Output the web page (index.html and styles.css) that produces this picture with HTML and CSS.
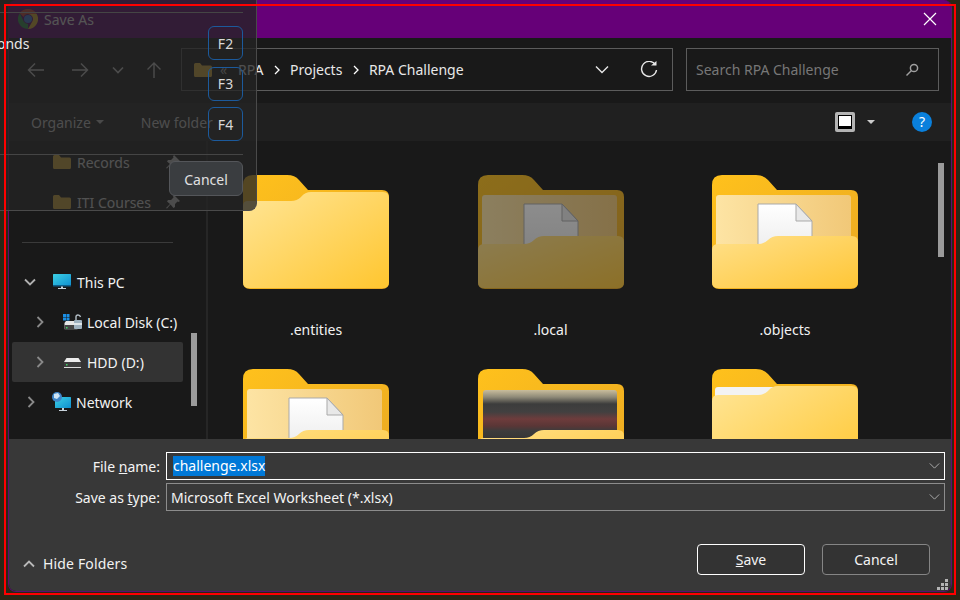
FILE: index.html
```html
<!DOCTYPE html>
<html lang="en">
<head>
<meta charset="utf-8">
<title>Save As</title>
<link rel="stylesheet" href="styles.css">
</head>
<body>
<svg class="defs" width="0" height="0" aria-hidden="true">
  <defs>
    <linearGradient id="gBack" x1="0" y1="0" x2="1" y2="1"><stop offset="0" stop-color="#ffc11c"/><stop offset="1" stop-color="#e9a823"/></linearGradient>
    <linearGradient id="gPaper" x1="0" y1="0" x2="1" y2="0"><stop offset="0" stop-color="#fde4a4"/><stop offset="1" stop-color="#f1c878"/></linearGradient>
    <linearGradient id="gFront" x1="0" y1="0" x2="1" y2="1"><stop offset="0" stop-color="#ffe596"/><stop offset="1" stop-color="#ffc62f"/></linearGradient>
    <linearGradient id="gFrontOpen" x1="0" y1="0" x2="1" y2="1"><stop offset="0" stop-color="#ffe08a"/><stop offset="1" stop-color="#ffc636"/></linearGradient>
    <linearGradient id="gDoc" x1="0" y1="0" x2="0" y2="1"><stop offset="0" stop-color="#fff"/><stop offset="1" stop-color="#eee"/></linearGradient>
    <linearGradient id="gBlur" x1="0" y1="0" x2="0" y2="1">
      <stop offset="0" stop-color="#c9bd9c"/><stop offset=".14" stop-color="#8f8a78"/><stop offset=".28" stop-color="#3c3c3c"/>
      <stop offset=".44" stop-color="#424040"/><stop offset=".58" stop-color="#6e3c3c"/><stop offset=".72" stop-color="#5a3636"/>
      <stop offset=".82" stop-color="#3c3c3c"/><stop offset="1" stop-color="#353535"/>
    </linearGradient>
    <linearGradient id="gScreen" x1="0" y1="0" x2="1" y2="1"><stop offset="0" stop-color="#3cd0e4"/><stop offset="1" stop-color="#0f8fd0"/></linearGradient>

    <symbol id="folder-back" viewBox="0 0 146 114"><path fill="url(#gBack)" d="M0 10Q0 0 10 0H44Q52 0 56 5L65 15H139Q146 15 146 22V107Q146 114 139 114H7Q0 114 0 107Z"/></symbol>
    <symbol id="folder-closed" viewBox="0 0 146 114">
      <use href="#folder-back" width="146" height="114"/>
      <path fill="url(#gFront)" d="M0 31Q0 26 5 26H48Q54 26 58 22Q62 17 68 17H140Q146 17 146 23V107Q146 113 140 113H6Q0 113 0 107Z"/>
    </symbol>
    <symbol id="folder-doc" viewBox="0 0 146 114">
      <use href="#folder-back" width="146" height="114"/>
      <rect x="4" y="20" width="135" height="60" rx="3" fill="url(#gPaper)"/>
      <path fill="url(#gDoc)" stroke="#a9a9a9" d="M46 29H84L100 46V72H46Z"/>
      <path fill="#e8e8e8" stroke="#a9a9a9" d="M84 29V46H100Z"/>
      <path fill="url(#gFrontOpen)" d="M0 75Q0 69 6 69H46Q52 69 56 65Q60 61 66 61H140Q146 61 146 67V107Q146 113 140 113H6Q0 113 0 107Z"/>
    </symbol>
    <symbol id="folder-photo" viewBox="0 0 146 114">
      <use href="#folder-back" width="146" height="114"/>
      <rect x="5" y="21" width="134" height="50" rx="3" fill="url(#gBlur)"/>
      <path fill="url(#gFrontOpen)" d="M0 75Q0 69 6 69H46Q52 69 56 65Q60 61 66 61H140Q146 61 146 67V107Q146 113 140 113H6Q0 113 0 107Z"/>
    </symbol>
    <symbol id="folder-white" viewBox="0 0 146 114">
      <use href="#folder-back" width="146" height="114"/>
      <rect x="3" y="18" width="90" height="20" rx="3" fill="#f3f3f3"/>
      <path fill="url(#gFront)" d="M0 32Q0 26 6 26H46Q52 26 56 22Q60 17 66 17H140Q146 17 146 23V107Q146 113 140 113H6Q0 113 0 107Z"/>
    </symbol>
    <symbol id="tiny-folder" viewBox="0 0 18 14"><path fill="#f0bd3e" d="M0 1.500Q0 0 1.500 0H6L8 2.500H16.500Q18 2.500 18 4V12.500Q18 14 16.500 14H1.500Q0 14 0 12.500Z"/></symbol>
    <symbol id="pin" viewBox="0 0 14 14"><path fill="#d8d8d8" d="M8 0 14 6 12.500 7 11.500 6.500 9 9 9 12 7.500 13 4.500 9.500 1 13.500 0 13 4 9 1 6.500 2 5 5 5 7.500 2.500 7 1.500Z"/></symbol>
  </defs>
</svg>

<main class="desktop">
  <section class="dialog">
    <header class="titlebar">
      <div class="title">
        <svg class="chrome" viewBox="0 0 20 20" aria-hidden="true">
          <path fill="#e04a3a" d="M10 0A10 10 0 0 1 18.700 5H10A5 5 0 0 0 5.500 8L1.800 4.200A10 10 0 0 1 10 0Z"/>
          <path fill="#f4c430" d="M18.700 5A10 10 0 0 1 10 20L14.300 12.500A5 5 0 0 0 14.300 7.500 5 5 0 0 0 10 5Z"/>
          <path fill="#2f9e4f" d="M1.800 4.200 5.700 12.500A5 5 0 0 0 10 15L10 20A10 10 0 0 1 1.800 4.200Z"/>
          <circle cx="10" cy="10" r="4" fill="#3f86f0"/>
        </svg>
        <span>Save As</span>
      </div>
      <svg class="close" viewBox="0 0 14 14" aria-hidden="true"><path d="M1 1 13 13M13 1 1 13"/></svg>
    </header>

    <div class="addressrow">
      <div class="nav">
        <svg class="nav-back line" viewBox="0 0 18 16"><path d="M17 8H2M8 1.500 1.500 8 8 14.500"/></svg>
        <svg class="nav-fwd line" viewBox="0 0 18 16"><path d="M1 8H16M10 1.500 16.500 8 10 14.500"/></svg>
        <svg class="nav-down line" viewBox="0 0 12 8"><path d="M1 1.500 6 6.500 11 1.500"/></svg>
        <svg class="nav-up line" viewBox="0 0 18 18"><path d="M9 17V2M2.500 8.500 9 2 15.500 8.500"/></svg>
      </div>
      <div class="address">
        <svg class="crumb-folder"><use href="#tiny-folder"/></svg>
        <span class="crumb-more">«</span>
        <span class="crumb">RPA</span>
        <svg class="crumb-sep" viewBox="0 0 6 10"><path d="M1 1 5 5 1 9"/></svg>
        <span class="crumb">Projects</span>
        <svg class="crumb-sep" viewBox="0 0 6 10"><path d="M1 1 5 5 1 9"/></svg>
        <span class="crumb">RPA Challenge</span>
        <svg class="addr-chev line" viewBox="0 0 14 9"><path d="M1 1.500 7 7.500 13 1.500"/></svg>
        <svg class="refresh line" viewBox="0 0 18 18"><path d="M15.500 4A7.500 7.500 0 1 0 16.500 9"/><path class="fillw" d="M11 4.500H16.500V0Z"/></svg>
      </div>
      <div class="search">
        <span>Search RPA Challenge</span>
        <svg class="magnifier" viewBox="0 0 14 14"><circle cx="9" cy="5" r="3.600"/><path d="M6.500 7.500 1.500 12.500"/></svg>
      </div>
    </div>

    <div class="toolbar">
      <span class="tool">Organize</span>
      <i class="caret caret-org"></i>
      <span class="tool tool-new">New folder</span>
      <div class="view-icon"><div class="view-inner"></div></div>
      <i class="caret caret-view"></i>
      <div class="help">?</div>
    </div>

    <div class="content">
      <nav class="sidebar">
        <div class="side-row pinned"><svg class="side-folder"><use href="#tiny-folder"/></svg><span>Records</span><svg class="pin"><use href="#pin"/></svg></div>
        <div class="side-row pinned"><svg class="side-folder"><use href="#tiny-folder"/></svg><span>ITI Courses</span><svg class="pin"><use href="#pin"/></svg></div>
        <div class="side-sep"></div>
        <div class="side-row pc">
          <svg class="exp line" viewBox="0 0 12 8"><path d="M1 1.500 6 6.500 11 1.500"/></svg>
          <svg class="side-ico" viewBox="0 0 18 16"><rect y="0" width="18" height="12" rx=".5" fill="url(#gScreen)"/><rect y="11" width="18" height="1.500" fill="#0d5f8c"/><path fill="#c9d4dc" d="M8 12.500H10V14H13V15H5V14H8Z"/></svg>
          <span>This PC</span>
        </div>
        <div class="side-row disk">
          <svg class="exp-r line" viewBox="0 0 8 12"><path d="M1.500 1 6.500 6 1.500 11"/></svg>
          <svg class="side-ico disk-ico" viewBox="0 0 20 17">
            <path fill="#1b8fe6" d="M0 0H3V3H0ZM3.500 0H6.500V3H3.500ZM0 3.500H3V6.500H0ZM3.500 3.500H6.500V6.500H3.500Z"/>
            <path fill="#e6e6e6" d="M1.500 9 3 7H13V15H1.500Z"/><rect x="1.500" y="11" width="13" height="5" fill="#454545"/><rect x="3" y="13" width="1.500" height="1.500" fill="#46d36a"/>
            <path fill="none" stroke="#b5c0c8" stroke-width="1.400" d="M13 6V3Q13 1 15 1T17.500 3"/><rect x="11" y="6" width="8" height="9" rx="1" fill="#9fb2c0"/><rect x="11" y="9" width="8" height="2" fill="#dfe6ea"/>
          </svg>
          <span>Local Disk (C:)</span>
        </div>
        <div class="side-row disk selected">
          <svg class="exp-r line" viewBox="0 0 8 12"><path d="M1.500 1 6.500 6 1.500 11"/></svg>
          <svg class="side-ico disk-ico" viewBox="0 0 20 17">
            <path fill="#ececec" d="M1 8 3.500 4H15.500L18 8Z"/><rect x="1" y="8" width="17" height="5" fill="#3e3e3e"/><rect x="1" y="13" width="17" height="1" fill="#dcdcdc"/><rect x="3" y="10" width="1.500" height="1.500" fill="#46d36a"/>
          </svg>
          <span>HDD (D:)</span>
        </div>
        <div class="side-row net">
          <svg class="exp-r line" viewBox="0 0 8 12"><path d="M1.500 1 6.500 6 1.500 11"/></svg>
          <svg class="side-ico net-ico" viewBox="0 0 20 20">
            <rect x="4" y="5" width="16" height="11" rx=".5" fill="url(#gScreen)"/><path fill="#c9d4dc" d="M11 16H13V18H16V19H8V18H11Z"/>
            <circle cx="6" cy="5" r="5" fill="#3f86c8"/><path fill="#cfe4f5" d="M3 2 7 1 9 4 6 7 3 6Z"/>
          </svg>
          <span>Network</span>
        </div>
        <div class="side-thumb"></div>
      </nav>

      <div class="files">
        <div class="grid">
          <figure class="file"><svg class="folder"><use href="#folder-closed"/></svg><figcaption>.entities</figcaption></figure>
          <figure class="file"><svg class="folder hidden-item"><use href="#folder-doc"/></svg><figcaption>.local</figcaption></figure>
          <figure class="file"><svg class="folder"><use href="#folder-doc"/></svg><figcaption>.objects</figcaption></figure>
          <figure class="file"><svg class="folder"><use href="#folder-doc"/></svg></figure>
          <figure class="file"><svg class="folder"><use href="#folder-photo"/></svg></figure>
          <figure class="file"><svg class="folder"><use href="#folder-white"/></svg></figure>
        </div>
        <div class="main-thumb"></div>
      </div>
    </div>

    <footer class="bottom">
      <div class="form">
        <label class="form-label">File <u>n</u>ame:</label>
        <div class="field active"><span class="selected-text">challenge.xlsx</span><svg class="field-chev" viewBox="0 0 12 7"><path d="M.5 .5 6 6 11.500 .5"/></svg></div>
        <label class="form-label">Save as <u>t</u>ype:</label>
        <div class="field"><span>Microsoft Excel Worksheet (*.xlsx)</span><svg class="field-chev" viewBox="0 0 12 7"><path d="M.5 .5 6 6 11.500 .5"/></svg></div>
      </div>
      <div class="actions">
        <svg class="hide-chev" viewBox="0 0 12 8"><path d="M1 6.500 6 1.500 11 6.500"/></svg>
        <span class="hide-text">Hide Folders</span>
        <button class="btn primary"><u>S</u>ave</button>
        <button class="btn">Cancel</button>
      </div>
      <svg class="grip" viewBox="0 0 12 12"><path d="M8 0H11V3H8ZM4 4H7V7H4ZM8 4H11V7H8ZM0 8H3V11H0ZM4 8H7V11H4ZM8 8H11V11H8Z"/></svg>
    </footer>
  </section>

  <aside class="overlay">
    <div class="ov-body">
      <span class="ov-label">onds</span>
      <div class="ov-keys">
        <span class="key">F2</span>
        <span class="key">F3</span>
        <span class="key">F4</span>
      </div>
    </div>
    <div class="ov-foot"><button class="ov-cancel">Cancel</button></div>
  </aside>

  <div class="redframe"></div>
</main>
</body>
</html>
```
FILE: styles.css
```css
* { box-sizing: border-box; }
html, body { margin: 0; height: 100%; }
body {
  background: #2a2716;
  font-family: "Noto Sans", "Open Sans", "Liberation Sans", sans-serif;
  font-size: 14px;
  color: #fff;
  overflow: hidden;
}
.defs { position: absolute; }
.desktop { position: relative; width: 960px; height: 600px; overflow: hidden; }

/* Dialog window */
.dialog {
  position: absolute;
  left: 8px; top: 0;
  width: 944px; height: 592px;
  display: flex;
  flex-direction: column;
  background: #191919;
  border: 1px solid #5a1070;
  border-top: 0;
  border-radius: 8px;
  overflow: hidden;
}
.titlebar {
  height: 38px;
  flex: none;
  background: #660078;
  display: flex;
  align-items: center;
  justify-content: space-between;
  padding: 0 14px 0 9px;
}
.title { display: flex; align-items: center; gap: 6px; color: #fff; }
.chrome { width: 20px; height: 20px; }
.close { width: 14px; height: 14px; fill: none; stroke: #fff; stroke-width: 1.2; }

.line { fill: none; stroke: #d8d8d8; stroke-width: 1.400; }
.addressrow {
  height: 65px; flex: none;
  display: flex;
  padding: 10px 12px 12px 0;
  gap: 13px;
}
.nav { width: 172px; flex: none; display: flex; align-items: center; padding-left: 18px; padding-top: 1px; }
.nav-back, .nav-fwd { width: 18px; height: 16px; }
.nav-fwd { margin-left: 26px; }
.nav-down { width: 12px; height: 8px; margin-left: 23px; stroke-width: 1.600; }
.nav-up { width: 18px; height: 18px; margin-left: 21px; }
.address, .search {
  height: 43px;
  border: 1px solid #5c5c5c;
  display: flex;
  align-items: center;
}
.address { width: 492px; margin-left: -13px; padding-left: 12px; }
.crumb-folder { width: 18px; height: 14px; }
.crumb-more { margin-left: 8px; color: #bbb; width: 10px; }
.crumb { color: #e8e8e8; }
.crumb-more + .crumb { margin-left: 8px; }
.crumb-sep { width: 6px; height: 10px; margin: 0 10px 0 10.500px; fill: none; stroke: #fff; stroke-width: 1.300; }
.addr-chev { width: 14px; height: 9px; margin-left: auto; stroke: #e6e6e6; }
.refresh { width: 18px; height: 18px; margin: 0 14px 0 31px; stroke: #e6e6e6; }
.refresh .fillw { fill: #e6e6e6; stroke: none; }
.search { flex: 1; padding: 0 19px 0 9px; justify-content: space-between; color: #777; }
.magnifier { width: 14px; height: 14px; fill: none; stroke: #a0a0a0; stroke-width: 1.500; }

.toolbar {
  height: 38px; flex: none;
  background: #202020;
  display: flex;
  align-items: center;
  padding-left: 22px;
  padding-right: 19px;
  color: #ddd;
}
.tool-new { margin-left: 37px; }
.caret { width: 0; height: 0; border: 4.500px solid transparent; border-top-color: #ccc; border-bottom: 0; }
.caret-org { margin-left: 5px; }
.view-icon {
  margin-left: auto;
  width: 20px; height: 20px;
  background: #b4b4b4;
  border-radius: 2px;
  padding: 3px;
  flex: none;
}
.view-inner { height: 14px; background: #fff; border: 1px solid #000; border-bottom-width: 3px; }
.caret-view { margin-left: 12px; }
.help {
  margin-left: 37px;
  width: 20px; height: 20px;
  border-radius: 50%;
  background: #0a80dc;
  color: #fff;
  text-align: center;
  font-size: 14px;
  line-height: 20px;
}

.content { flex: 1; min-height: 0; display: flex; }
.sidebar {
  position: relative;
  width: 199px; flex: none;
  border-right: 2px solid #262626;
  padding: 1px 0 0 3px;
  overflow: hidden;
}
.side-row { height: 40px; width: 171px; display: flex; align-items: center; white-space: nowrap; color: #f2f2f2; }
.side-row.selected { background: #333; border-radius: 2px; }
.pinned { padding-left: 41px; }
.side-folder { width: 18px; height: 14px; margin-right: 6px; }
.pin { width: 14px; height: 14px; margin-left: auto; margin-right: 3px; }
.pinned span { flex: 1; }
.side-sep { height: 40px; margin: 0 10px; width: 151px; display: flex; align-items: center; }
.side-sep::before { content: ""; flex: 1; height: 1px; background: #3a3a3a; }
.pc { padding-left: 12px; }
.exp { width: 12px; height: 8px; stroke: #b0b0b0; stroke-width: 1.800; }
.exp-r { width: 8px; height: 12px; stroke: #8a8a8a; stroke-width: 1.800; }
.side-ico { flex: none; }
.pc .side-ico { width: 18px; height: 16px; margin: 0 6px 0 17px; }
.disk { padding-left: 24px; }
.disk-ico { width: 20px; height: 17px; margin: 0 4px 0 19px; }
.net { padding-left: 15px; }
.net-ico { width: 20px; height: 20px; margin: 0 5px 0 16px; }
.side-thumb { position: absolute; left: 182px; top: 192px; width: 6px; height: 73px; background: #9b9b9b; }

.files { position: relative; flex: 1; min-width: 0; overflow: hidden; padding: 34px 0 0 35px; }
.grid { display: grid; grid-template-columns: repeat(3, 146px); column-gap: 88.500px; row-gap: 29px; }
.file { margin: 0; }
.folder { display: block; width: 146px; height: 114px; }
.hidden-item { opacity: .5; }
.file figcaption { margin-top: 31px; height: 20px; line-height: 20px; text-align: center; color: #f2f2f2; }
.main-thumb { position: absolute; right: 7px; top: 22px; width: 6px; height: 94px; background: #9b9b9b; }

.bottom { position: relative; height: 152px; flex: none; background: #383838; padding-top: 13px; }
.form { display: grid; grid-template-columns: 151px 779px; column-gap: 6px; row-gap: 3px; }
.form-label { display: flex; align-items: center; justify-content: flex-end; white-space: pre; color: #f4f4f4; }
.field {
  height: 28px;
  border: 1px solid #8c8c8c;
  display: flex;
  align-items: center;
  justify-content: space-between;
  padding: 0 4px 0 4px;
  color: #f4f4f4;
}
.field.active { border-color: #fff; padding-left: 6px; }
.selected-text { background: #0078d7; color: #fff; height: 20px; line-height: 20px; }
.field-chev { width: 11px; height: 6px; fill: none; stroke: #bdbdbd; }
.actions { display: flex; align-items: center; margin-top: 33px; padding-left: 14px; padding-right: 21px; }
.hide-chev { width: 12px; height: 8px; fill: none; stroke: #b8b8b8; stroke-width: 1.800; margin-top: 8px; }
.hide-text { margin: 8px auto 0 8px; color: #f2f2f2; letter-spacing: .15px; }
.btn {
  width: 108px; height: 31px;
  background: #333;
  border: 1px solid #858585;
  border-radius: 4px;
  color: #f4f4f4;
  font: inherit;
  padding: 0;
}
.btn.primary { border-color: #fff; margin-right: 17px; }
.grip { position: absolute; right: 2px; bottom: 0; width: 12px; height: 12px; fill: #b4b4b4; }

/* Translucent window over the dialog */
.overlay {
  position: absolute;
  left: 0; top: 0;
  width: 257px; height: 211px;
  background: rgba(36, 36, 36, .78);
  border-right: 1px solid #4a4a4a;
  border-bottom: 1px solid #4a4a4a;
  border-bottom-right-radius: 8px;
  padding: 12px 13px 0 0;
  display: flex;
  flex-direction: column;
}
.ov-body {
  height: 142px;
  border-top: 1px solid #454545;
  display: flex;
  justify-content: space-between;
  align-items: flex-start;
}
.ov-label { margin: 21px 0 0 -3px; height: 20px; line-height: 20px; color: #e8e8e8; }
.ov-keys { display: flex; flex-direction: column; gap: 6.500px; margin-top: 13px; }
.key {
  width: 35px; height: 34px;
  border: 1px solid #1c5a9c;
  border-radius: 6px;
  display: flex;
  align-items: center;
  justify-content: center;
  color: #d8d8d8;
}
.ov-foot { border-top: 1px solid #454545; flex: 1; display: flex; justify-content: flex-end; align-items: flex-start; padding-top: 6px; }
.ov-cancel {
  width: 74px; height: 35px;
  background: #3a3d40;
  border: 1px solid #54565a;
  border-radius: 6px;
  color: #e0e0e0;
  font: inherit;
  padding: 2px 0 0;
}

.redframe {
  position: absolute;
  left: 4px; top: 4px;
  width: 952px; height: 591px;
  border: 2px solid #ff0000;
  pointer-events: none;
}
```
